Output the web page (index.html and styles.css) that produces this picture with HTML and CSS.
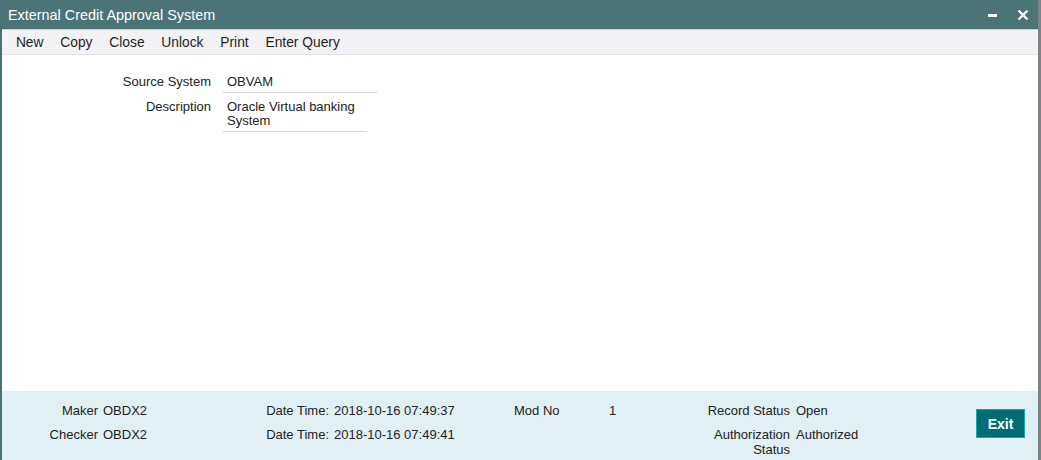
FILE: index.html
```html
<!DOCTYPE html>
<html lang="en">
<head>
  <meta charset="UTF-8">
  <title>External Credit Approval System</title>
  <link rel="stylesheet" href="styles.css">
</head>
<body>

  <div class="window">

    <!-- Title bar -->
    <div class="title-bar">
      <div class="title">External Credit Approval System</div>
      <div class="window-buttons">
        <span class="min-btn"></span>
        <svg class="close-btn" width="12" height="12" viewBox="0 0 12 12">
          <path d="M1.5 1.5 L10.5 10.5 M10.5 1.5 L1.5 10.5" stroke="#fff" stroke-width="2.4" fill="none"/>
        </svg>
      </div>
    </div>

    <!-- Toolbar -->
    <div class="toolbar">
      <span class="tool">New</span>
      <span class="tool">Copy</span>
      <span class="tool">Close</span>
      <span class="tool">Unlock</span>
      <span class="tool">Print</span>
      <span class="tool">Enter Query</span>
    </div>

    <!-- Main form -->
    <div class="content">
      <div class="form">
        <div class="label">Source System</div>
        <div class="field field-source">OBVAM</div>
        <div class="label label-desc">Description</div>
        <div class="field field-desc">Oracle Virtual banking<br>System</div>
      </div>
    </div>

    <!-- Audit footer -->
    <div class="footer">
      <div class="audit">
        <div class="f-label c1">Maker</div>
        <div class="f-value c2">OBDX2</div>
        <div class="f-label c3">Date Time:</div>
        <div class="f-value c4">2018-10-16 07:49:37</div>
        <div class="f-text c5">Mod No</div>
        <div class="f-value c6">1</div>
        <div class="f-label c7">Record Status</div>
        <div class="f-value c8">Open</div>

        <div class="f-label c1">Checker</div>
        <div class="f-value c2">OBDX2</div>
        <div class="f-label c3">Date Time:</div>
        <div class="f-value c4">2018-10-16 07:49:41</div>
        <div class="c5"></div>
        <div class="c6"></div>
        <div class="f-label c7">Authorization Status</div>
        <div class="f-value c8">Authorized</div>
      </div>
      <button class="exit-button">Exit</button>
    </div>

  </div>

</body>
</html>
```

FILE: styles.css
```css
body {
  margin: 0;
  padding: 0;
  font-family: 'Liberation Sans', Arial, sans-serif;
  color: #222;
  background: #fff;
}

.window {
  width: 1041px;
  height: 460px;
  box-sizing: border-box;
  border-left: 2px solid #4a7174;
  border-right: 3px solid #7d8486;
  display: flex;
  flex-direction: column;
  overflow: hidden;
}

/* Title bar */
.title-bar {
  height: 29px;
  background-color: #4b7477;
  color: #fff;
  display: flex;
  align-items: center;
  justify-content: space-between;
  padding: 0 9px 0 6px;
  flex-shrink: 0;
}

.title {
  font-size: 14.4px;
}

.window-buttons {
  display: flex;
  align-items: center;
  gap: 20px;
}

.min-btn {
  display: block;
  width: 9px;
  height: 3px;
  background: #fff;
  margin-top: 2px;
}

.close-btn {
  display: block;
}

/* Toolbar */
.toolbar {
  height: 24px;
  background-color: #f3f3f6;
  border-top: 1px solid #c6d3d5;
  border-bottom: 1px solid #e2e2e6;
  display: flex;
  align-items: center;
  padding-left: 5.5px;
  flex-shrink: 0;
}

.tool {
  font-size: 13.8px;
  color: #1d1d1d;
  padding: 0 8.4px;
}

/* Form */
.content {
  flex: 1;
  background: #fff;
}

.form {
  display: grid;
  grid-template-columns: 209px auto;
  column-gap: 12px;
  row-gap: 5px;
  padding-top: 18px;
  font-size: 13px;
}

.label {
  text-align: right;
  line-height: 16px;
  padding-top: 1px;
}

.field {
  padding: 1px 4px 2px;
  line-height: 16px;
  border-bottom: 1px solid #d5d5d5;
}

.field-source {
  width: 146px;
}

.field-desc {
  width: 135px;
  line-height: 14px;
  padding-top: 2px;
  padding-bottom: 3px;
}

/* Footer */
.footer {
  height: 69px;
  background-color: #e1f0f4;
  display: flex;
  align-items: flex-start;
  justify-content: space-between;
  flex-shrink: 0;
  font-size: 13px;
}

.audit {
  display: grid;
  grid-template-columns: 96px 168px 63px 175px 105px 91px 90px 120px;
  row-gap: 9px;
  line-height: 15px;
  padding-top: 12px;
}

.f-label {
  text-align: right;
}

.c2, .c4 {
  padding-left: 5px;
}

.c8 {
  padding-left: 6px;
}

.c5 {
  padding-left: 10px;
}

.exit-button {
  margin: 18px 13px 0 0;
  width: 49px;
  height: 29px;
  background-color: #006d75;
  border: 1px solid #19a3ab;
  color: #fff;
  font-family: 'Liberation Sans', Arial, sans-serif;
  font-size: 14px;
  font-weight: bold;
  padding: 0;
  cursor: pointer;
}
```
